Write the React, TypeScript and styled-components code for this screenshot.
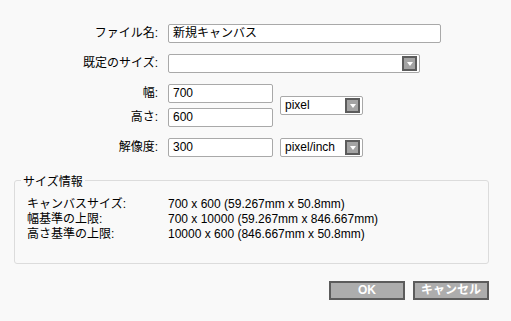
import {createGlobalStyle, styled} from 'styled-components';

const GlobalStyle = createGlobalStyle`
  html, body {
    margin: 0;
    padding: 0;
    background: #f9f9f9;
  }
  body {
    font-family: 'Liberation Sans', 'Noto Sans CJK JP', sans-serif;
    font-size: 12px;
    color: #000;
  }
`;

const Dialog = styled.div`
  width: 511px;
  height: 321px;
  box-sizing: border-box;
  padding-top: 24px;
  display: flex;
  flex-direction: column;
`;

const Form = styled.div`
  display: flex;
  flex-direction: column;
  gap: 11px;
`;

const Row = styled.div`
  display: flex;
  align-items: center;
  gap: 10px;
`;

const Label = styled.div`
  width: 158px;
  height: 19px;
  line-height: 19px;
  text-align: right;
  white-space: nowrap;
`;

const Stack = styled.div`
  display: flex;
  flex-direction: column;
  gap: 5px;
`;

const Group = styled.div`
  display: flex;
  align-items: center;
  gap: 7px;
`;

const TextBox = styled.div<{$width: number}>`
  width: ${p => p.$width}px;
  height: 19px;
  box-sizing: border-box;
  border: 1px solid #a9a9a9;
  border-radius: 2px;
  background: #fff;
  padding: 0 4px;
  line-height: 17px;
  white-space: nowrap;
  overflow: hidden;
`;

const SelectBox = styled(TextBox)`
  position: relative;
`;

const Arrow = styled.span`
  position: absolute;
  right: 2px;
  top: 1px;
  width: 15px;
  height: 15px;
  box-sizing: border-box;
  border: 2px solid #5c5c5c;
  background: #a4a4a4;
  display: flex;
  align-items: center;
  justify-content: center;
  &::after {
    content: '';
    border-left: 3px solid transparent;
    border-right: 3px solid transparent;
    border-top: 4px solid #fff;
  }
`;

const InfoBox = styled.fieldset`
  margin: 15px 22px 0 14px;
  padding: 8px 12px 20px;
  border: 1px solid #dcdcdc;
  border-radius: 3px;
  height: 92px;
  box-sizing: border-box;
  legend {
    padding: 0 2px;
    margin-left: -6px;
  }
`;

const InfoGrid = styled.div`
  display: grid;
  grid-template-columns: 141px auto;
  line-height: 15px;
`;

const Buttons = styled.div`
  display: flex;
  justify-content: flex-end;
  gap: 8px;
  margin: 17px 22px 0 0;
`;

const Button = styled.button`
  width: 76px;
  height: 19px;
  box-sizing: border-box;
  border: 2px solid #5c5c5c;
  background: #adadad;
  color: #fff;
  font-family: 'Liberation Sans', 'Noto Sans CJK JP', sans-serif;
  font-size: 12px;
  font-weight: bold;
  padding: 0;
  line-height: 15px;
`;

function Select({width, value}: {width: number; value: string}) {
  return (
    <SelectBox $width={width}>
      {value}
      <Arrow />
    </SelectBox>
  );
}

const info: [string, string][] = [
  ['キャンバスサイズ:', '700 x 600 (59.267mm x 50.8mm)'],
  ['幅基準の上限:', '700 x 10000 (59.267mm x 846.667mm)'],
  ['高さ基準の上限:', '10000 x 600 (846.667mm x 50.8mm)'],
];

export default function App() {
  return (
    <Dialog>
      <GlobalStyle />
      <Form>
        <Row>
          <Label>ファイル名:</Label>
          <TextBox $width={273}>新規キャンバス</TextBox>
        </Row>
        <Row>
          <Label>既定のサイズ:</Label>
          <Select width={252} value="" />
        </Row>
        <Row>
          <Stack>
            <Label>幅:</Label>
            <Label>高さ:</Label>
          </Stack>
          <Group>
            <Stack>
              <TextBox $width={105}>700</TextBox>
              <TextBox $width={105}>600</TextBox>
            </Stack>
            <Select width={83} value="pixel" />
          </Group>
        </Row>
        <Row>
          <Label>解像度:</Label>
          <Group>
            <TextBox $width={105}>300</TextBox>
            <Select width={83} value="pixel/inch" />
          </Group>
        </Row>
      </Form>
      <InfoBox>
        <legend>サイズ情報</legend>
        <InfoGrid>
          {info.map(([k, v]) => (
            <>
              <span key={k}>{k}</span>
              <span key={v}>{v}</span>
            </>
          ))}
        </InfoGrid>
      </InfoBox>
      <Buttons>
        <Button>OK</Button>
        <Button>キャンセル</Button>
      </Buttons>
    </Dialog>
  );
}
